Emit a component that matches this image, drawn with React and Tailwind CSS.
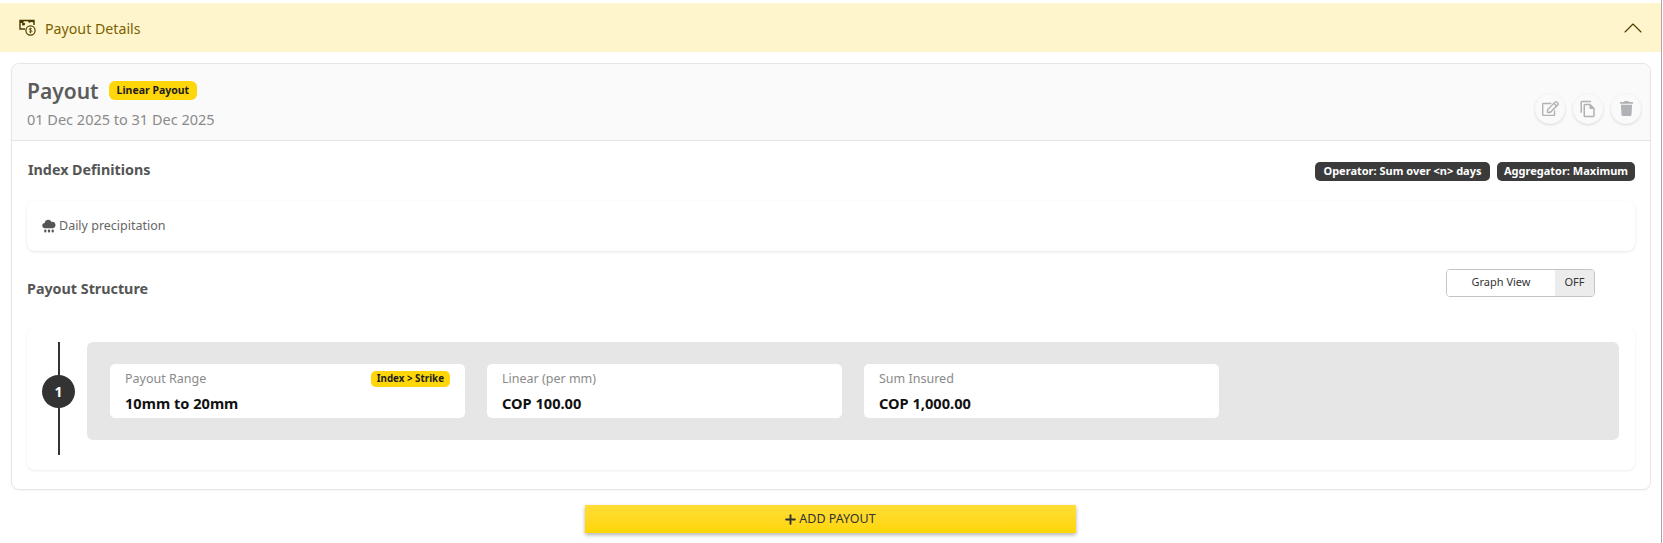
import { ChevronUp, Plus } from "lucide-react";
import { FaRegEdit, FaTrash } from "react-icons/fa";
import { MdOutlineFileCopy } from "react-icons/md";

const fieldCards = [
  { label: "Payout Range", value: "10mm to 20mm", badge: "Index > Strike" },
  { label: "Linear (per mm)", value: "COP 100.00" },
  { label: "Sum Insured", value: "COP 1,000.00" },
];

function PayoutIcon() {
  return (
    <svg className="h-[17px] w-[17px]" viewBox="0 0 17 17" fill="none" stroke="#4a3b00" strokeWidth="1.2">
      <path d="M6 10H1V1.5h14V6" strokeWidth="1.4" />
      <path d="M1 1.5h14v2.5a4 4 0 0 0-5 0 3 3 0 0 0-2-2.5 3 3 0 0 0-4 2.5H1z" fill="#4a3b00" stroke="none" />
      <circle cx="4.5" cy="5" r="1.6" fill="#4a3b00" stroke="none" />
      <circle cx="11.5" cy="11.5" r="4.6" />
      <path d="M13 10c-.4-.7-2.8-.9-2.9.3-.1 1.2 3 .8 2.9 2-.1 1.2-2.6 1-3 .2M11.5 8.7v5.6" strokeWidth="0.8" />
    </svg>
  );
}

function RainIcon() {
  return (
    <svg className="h-[14px] w-[14px]" viewBox="0 0 14 14" fill="#555555">
      <path d="M3 9.2a2.6 2.6 0 0 1-.4-5.2A3.6 3.6 0 0 1 9.5 3a3.1 3.1 0 0 1 1.5 6.2z" />
      <rect x="2.2" y="10.4" width="2.2" height="3" rx="1" />
      <rect x="5.9" y="10.4" width="2.2" height="3" rx="1" />
      <rect x="9.6" y="10.4" width="2.2" height="3" rx="1" />
    </svg>
  );
}

function IconButton({ children }) {
  return (
    <button className="flex h-[30px] w-[30px] items-center justify-center rounded-full bg-[#fafafa] text-[#b0b2b5] shadow-[0_1px_3px_rgba(0,0,0,0.14)]">
      {children}
    </button>
  );
}

function DarkChip({ children, width }) {
  return (
    <span className={`flex h-[19px] items-center justify-center rounded-[5px] bg-[#3b3b3b] text-[11px] font-bold text-white ${width}`}>
      {children}
    </span>
  );
}

export default function App() {
  return (
    <div className="h-[543px] w-[1662px] border-r border-[#a8a8a8] bg-white pt-[3px] font-['Noto_Sans','Open_Sans',sans-serif]">
      {/* Accordion header */}
      <div className="flex h-[49px] items-center justify-between bg-[#fff5cc] pl-[19px] pr-[12px]">
        <div className="flex items-center gap-[9px]">
          <PayoutIcon />
          <span className="mt-[2px] text-[14.2px] text-[#7a5f00]">Payout Details</span>
        </div>
        <ChevronUp className="h-[32px] w-[32px] text-[#4a3b00]" strokeWidth={0.8} />
      </div>

      {/* Payout card */}
      <div className="ml-[11px] mt-[11px] h-[427px] w-[1640px] overflow-hidden rounded-[8px] border border-[#e6e6e6] shadow-[0_1px_2px_rgba(0,0,0,0.04)]">
        <div className="flex h-[77px] items-center justify-between border-b border-[#e4e4e4] bg-[#fafafa] pl-[15px] pr-[8px]">
          <div>
            <div className="flex items-center gap-[10px]">
              <h1 className="text-[21px] font-semibold leading-[30px] text-[#5c5c5c]">Payout</h1>
              <span className="flex h-[19px] items-center rounded-[6px] bg-[#ffd60a] px-[8px] text-[10.5px] font-bold text-[#1c1c1c]">
                Linear Payout
              </span>
            </div>
            <p className="mt-[3px] text-[14.5px] leading-[20px] text-[#8a8a8a]">01 Dec 2025 to 31 Dec 2025</p>
          </div>
          <div className="mt-[13px] mr-[1px] flex gap-[8px]">
            <IconButton><FaRegEdit className="h-[17px] w-[17px]" /></IconButton>
            <IconButton><MdOutlineFileCopy className="h-[18px] w-[18px]" /></IconButton>
            <IconButton><FaTrash className="h-[15px] w-[15px]" /></IconButton>
          </div>
        </div>

        <div className="px-[15px]">
          {/* Index definitions */}
          <div className="flex h-[60px] items-center justify-between">
            <h2 className="mb-[3px] ml-[1px] text-[14.3px] font-bold text-[#555555]">Index Definitions</h2>
            <div className="flex gap-[7px]">
              <DarkChip width="w-[175px]">Operator: Sum over &lt;n&gt; days</DarkChip>
              <DarkChip width="w-[138px]">Aggregator: Maximum</DarkChip>
            </div>
          </div>
          <div className="flex h-[50px] items-center gap-[3px] rounded-[8px] pl-[15px] text-[12.5px] text-[#666666] shadow-[0_1px_3px_rgba(0,0,0,0.1)]">
            <RainIcon />
            <span>Daily precipitation</span>
          </div>

          {/* Payout structure */}
          <div className="flex h-[77px] items-center justify-between pb-[2px] pr-[40px]">
            <h2 className="text-[14.3px] font-bold text-[#555555]">Payout Structure</h2>
            <div className="mb-[12px] flex h-[28px] w-[149px] overflow-hidden rounded-[4px] border border-[#c4c4c4] text-[11px] text-[#333333]">
              <span className="flex flex-1 items-center justify-center bg-white">Graph View</span>
              <span className="flex w-[39px] items-center justify-center bg-[#ececec]">OFF</span>
            </div>
          </div>

          <div className="flex h-[142px] w-[1608px] rounded-[8px] pl-[15px] pr-[16px] pt-[14px] shadow-[0_1px_3px_rgba(0,0,0,0.08)]">
            <div className="relative flex h-[113px] w-[45px] shrink-0 justify-start">
              <div className="ml-[16px] h-full w-[2px] bg-[#333333]" />
              <div className="absolute left-0 top-[33px] flex h-[33px] w-[33px] items-center justify-center rounded-full bg-[#333333] text-[14px] font-bold text-white">
                1
              </div>
            </div>
            <div className="flex h-[98px] flex-1 items-center gap-[22px] rounded-[6px] bg-[#e6e6e6] px-[23px]">
              {fieldCards.map((card) => (
                <div key={card.label} className="h-[54px] w-[355px] rounded-[5px] bg-white pl-[15px] pr-[15px] pt-[5px]">
                  <div className="flex h-[20px] items-center justify-between">
                    <span className="text-[12.5px] text-[#8a8a8a]">{card.label}</span>
                    {card.badge && (
                      <span className="flex h-[16px] items-center rounded-[5px] bg-[#ffd60a] px-[6px] text-[9.8px] font-bold text-[#1c1c1c]">
                        {card.badge}
                      </span>
                    )}
                  </div>
                  <div className="mt-[4px] text-[14.6px] font-bold leading-[20px] text-[#111111]">{card.value}</div>
                </div>
              ))}
            </div>
          </div>
        </div>
      </div>

      {/* Add payout */}
      <div className="mt-[15px] flex justify-center">
        <button className="flex h-[28px] w-[491px] items-center justify-center gap-[1px] bg-gradient-to-b from-[#ffdd33] to-[#ffd600] pr-[2px] text-[12.5px] text-[#333333] shadow-[0_2px_4px_rgba(0,0,0,0.3)]">
          <Plus className="h-[15px] w-[15px]" strokeWidth={3} />
          ADD PAYOUT
        </button>
      </div>
    </div>
  );
}
